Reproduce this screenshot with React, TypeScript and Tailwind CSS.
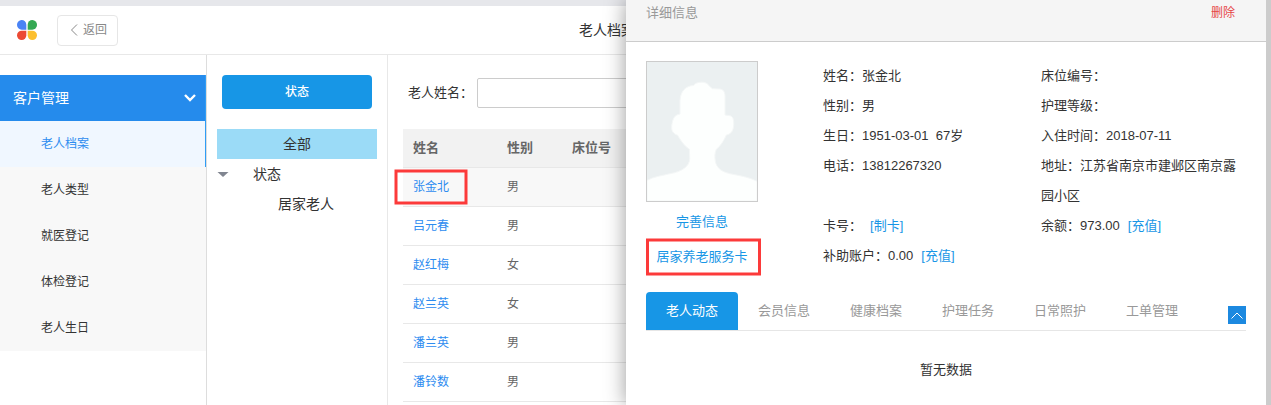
import { useState } from "react";

const menuItems = ["老人档案", "老人类型", "就医登记", "体检登记", "老人生日"];

const people = [
  { name: "张金北", gender: "男" },
  { name: "吕元春", gender: "男" },
  { name: "赵红梅", gender: "女" },
  { name: "赵兰英", gender: "女" },
  { name: "潘兰英", gender: "男" },
  { name: "潘铃数", gender: "男" },
];

const tabs = ["老人动态", "会员信息", "健康档案", "护理任务", "日常照护", "工单管理"];

const Logo = () => (
  <svg className="h-5 w-5 shrink-0" viewBox="0 0 60 60">
    <path d="M28 29H14A14 14.5 0 1 1 28 14Z" fill="#4a83f5" />
    <path d="M32 29V14A14 14.5 0 1 1 46 29Z" fill="#34a853" />
    <path d="M28 32V46A14 14 0 1 1 14 32Z" fill="#ec4a34" />
    <path d="M32 32H46A14 14 0 1 1 32 46Z" fill="#fcbf2e" />
  </svg>
);

const Avatar = () => (
  <svg className="h-[141px] w-28 border border-[#ccc] bg-[#ebf0f1]" viewBox="81 186 330 417">
    <path
      d="M81 541C100 530 130 526 150 521C185 515 209 500 209 475L208 448C195 440 180 420 173 406C160 402 153 392 155 378C158 355 163 345 180 342L180 300C182 275 195 258 221 256C225 248 240 245 252 247C266 249 268 262 278 266L300 267C310 268 315 276 315 288L315 345L330 347C342 350 342 365 341 378C339 395 332 403 319 405C312 422 300 440 289 448C284 460 284 470 286 483C290 505 305 515 330 521C360 527 390 532 411 544L411 603L81 603Z"
      fill="#fdfffe"
      stroke="#f4f7f7"
      strokeWidth="3"
    />
  </svg>
);

const Header = () => (
  <header className="flex h-[55px] items-center border-t-6 border-b border-t-[#e6e7eb] border-b-[#e8e8e8] pl-[17px]">
    <Logo />
    <button
      type="button"
      className="ml-5 flex h-[31px] w-[61px] shrink-0 items-center gap-[5px] rounded border border-[#e6e6e6] pl-3 text-xs text-[#888]"
    >
      <svg className="h-3 w-2" viewBox="0 0 8 12" fill="none" stroke="currentColor">
        <path d="M7 .5 1.5 6 7 11.5" />
      </svg>
      返回
    </button>
    <h1 className="ml-[461px] shrink-0 text-sm">老人档案</h1>
  </header>
);

const Sidebar = () => (
  <nav className="w-[207px] shrink-0 border-r border-[#ddd] pt-5">
    <button
      type="button"
      className="flex h-[46px] w-full items-center justify-between border-r border-[#2f9df5] bg-[#258bec] pr-[9px] pl-[13px] text-sm text-white"
    >
      客户管理
      <svg className="h-3 w-3" viewBox="0 0 12 12" fill="none" stroke="currentColor" strokeWidth="2.4">
        <path d="M1 3l5 5 5-5" />
      </svg>
    </button>
    <ul>
      {menuItems.map((item, i) => (
        <li key={item}>
          <a
            href="#"
            className={`block h-[46px] pl-[41px] text-xs leading-[46px] ${
              i === 0 ? "border-r border-[#2f9df5] bg-[#f0f7ff] text-[#2d8cf0]" : "bg-[#f8f8f8]"
            }`}
          >
            {item}
          </a>
        </li>
      ))}
    </ul>
  </nav>
);

const StatusTree = () => (
  <aside className="w-[181px] shrink-0 border-r border-[#e8e8e8] px-[10px] pt-5 text-sm leading-[30px]">
    <div className="px-[5px]">
      <button type="button" className="h-[34px] w-full rounded bg-[#1796e6] text-xs font-medium text-white">
        状态
      </button>
    </div>
    <ul className="mt-5">
      <li className="bg-[#9bdbf7] text-center">全部</li>
      <li className="flex items-center">
        <svg className="h-[5px] w-3" viewBox="0 0 12 5">
          <path d="M.5 0h11L6 5Z" fill="#808590" />
        </svg>
        <span className="pl-6">状态</span>
      </li>
      <li className="pl-[61px]">居家老人</li>
    </ul>
  </aside>
);

const PeopleList = () => (
  <main className="min-w-0 flex-1 pt-[23px] pl-[15px]">
    <div className="flex items-center gap-1 pl-[5px] text-[13px]">
      <label htmlFor="name" className="shrink-0">
        老人姓名：
      </label>
      <input id="name" type="text" className="h-[30px] w-[200px] rounded-xs border border-[#ccc] px-2" />
    </div>
    <table className="mt-[21px] w-full table-fixed border-separate border-spacing-0 text-left text-xs text-[#666]">
      <thead className="bg-[#f2f2f2] text-[13px]">
        <tr>
          <th className="h-[39px] w-[94px] border-b border-[#e8e8e8] px-[10px] font-bold">姓名</th>
          <th className="w-[65px] border-b border-[#e8e8e8] px-[10px] font-bold">性别</th>
          <th className="border-b border-[#e8e8e8] px-[10px] font-bold">床位号</th>
        </tr>
      </thead>
      <tbody>
        {people.map((p, i) => (
          <tr key={p.name} className={i === 0 ? "bg-[#f8f8f8]" : ""}>
            <td className="h-[39px] border-b border-[#e8e8e8] px-[10px]">
              <a href="#" className="relative text-[#2d8cf0]">
                {p.name}
                {i === 0 && (
                  <span className="absolute top-1/2 left-1/2 h-[35px] w-[73px] -translate-x-1/2 -translate-y-1/2 border-3 border-[#fc3a3a]" />
                )}
              </a>
            </td>
            <td className="border-b border-[#e8e8e8] px-[10px]">{p.gender}</td>
            <td className="border-b border-[#e8e8e8]" />
          </tr>
        ))}
      </tbody>
    </table>
  </main>
);

const Drawer = () => {
  const [tab, setTab] = useState(0);

  return (
    <section className="absolute inset-y-0 right-0 w-[645px] border-r-5 border-[#ccc] bg-white text-[13px] shadow-[0_0_20px_rgba(0,0,0,0.4)]">
      <div className="flex h-[42px] justify-between border-b border-[#ccc] bg-[#f5f5f5] pr-[31px] pl-5 leading-[26px]">
        <h2 className="text-[#999]">详细信息</h2>
        <button type="button" className="h-[26px] text-xs text-[#e64545]">
          删除
        </button>
      </div>

      <div className="px-5 pt-[19px]">
        <div className="flex">
          <div className="w-28 shrink-0 text-center">
            <Avatar />
            <a href="#" className="mt-[5px] block leading-[30px] text-[#1796e6]">
              完善信息
            </a>
            <a href="#" className="relative mt-[5px] block leading-[30px] text-[#1796e6]">
              居家养老服务卡
              <span className="absolute top-1/2 left-0 h-[37px] w-[115px] -translate-y-1/2 border-3 border-[#fc3a3a]" />
            </a>
          </div>

          <div className="ml-[65px] grid flex-1 grid-cols-[218px_1fr] content-start leading-[30px]">
            <p>姓名：张金北</p>
            <p>床位编号：</p>
            <p>性别：男</p>
            <p>护理等级：</p>
            <p>生日：1951-03-01 &nbsp;67岁</p>
            <p>入住时间：2018-07-11</p>
            <p>电话：13812267320</p>
            <p>地址：江苏省南京市建邺区南京露园小区</p>
            <p>
              卡号：
              <a href="#" className="ml-2 text-[#1796e6]">[制卡]</a>
            </p>
            <p>
              余额：973.00
              <a href="#" className="ml-2 text-[#1796e6]">[充值]</a>
            </p>
            <p>
              补助账户：0.00
              <a href="#" className="ml-2 text-[#1796e6]">[充值]</a>
            </p>
          </div>
        </div>

        <div className="mt-5 flex items-end border-b border-[#e6e6e6]">
          {tabs.map((t, i) => (
            <button
              key={t}
              type="button"
              onClick={() => setTab(i)}
              className={`h-[38px] w-[92px] rounded-t ${i === tab ? "bg-[#1796e6] text-white" : "text-[#999]"}`}
            >
              {t}
            </button>
          ))}
          <button
            type="button"
            aria-label="收起"
            className="mb-[6px] ml-auto flex h-[18px] w-[18px] items-center justify-center bg-[#1c89e0] text-white"
          >
            <svg className="h-[7px] w-3" viewBox="0 0 12 7" fill="none" stroke="currentColor">
              <path d="M.5 6.5 6 1l5.500 5.500" />
            </svg>
          </button>
        </div>
        <p className="py-6 text-center leading-[30px]">暂无数据</p>
      </div>
    </section>
  );
};

const App = () => {
  return (
    <div
      lang="zh-CN"
      className="relative flex min-h-screen flex-col overflow-hidden bg-white font-['Liberation_Sans','Noto_Sans_CJK_SC',sans-serif] text-[#333]"
    >
      <Header />
      <div className="flex flex-1">
        <Sidebar />
        <StatusTree />
        <PeopleList />
      </div>
      <Drawer />
    </div>
  );
};

export default App;
